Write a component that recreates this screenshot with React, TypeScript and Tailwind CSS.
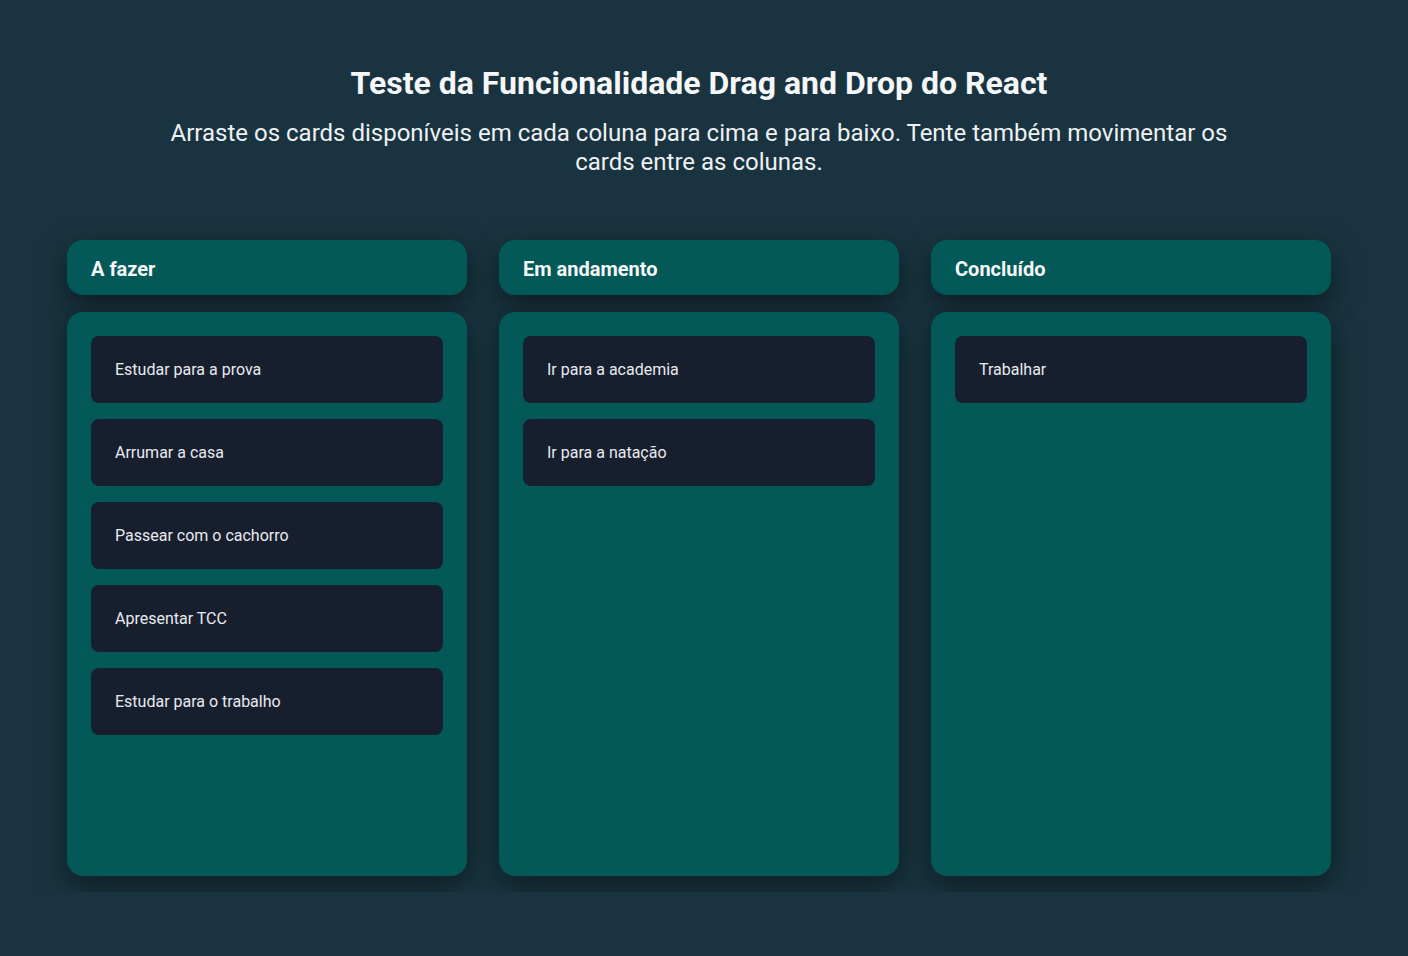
import React from "react";

const columns = [
  { title: "A fazer", cards: ["Estudar para a prova", "Arrumar a casa", "Passear com o cachorro", "Apresentar TCC", "Estudar para o trabalho"] },
  { title: "Em andamento", cards: ["Ir para a academia", "Ir para a natação"] },
  { title: "Concluído", cards: ["Trabalhar"] },
];

export default function App() {
  return (
    <div className="min-h-screen bg-[#193440] text-[#f3f4f6]" style={{ fontFamily: "Roboto, 'Noto Sans', sans-serif" }}>
      <div className="w-[1398px]">
        <div className="pt-[64px] flex flex-col items-center text-center">
          <h1 className="text-[32px] font-bold leading-[38px] text-[#f5f7f8]">Teste da Funcionalidade Drag and Drop do React</h1>
          <p className="mt-[17px] max-w-[1080px] text-[24px] leading-[29px] text-[#eef1f3]">
            Arraste os cards disponíveis em cada coluna para cima e para baixo. Tente também movimentar os cards entre as colunas.
          </p>
        </div>
        <div className="mt-[31px] overflow-x-auto pt-8 pb-4 pl-[67px]">
          <div className="flex gap-8">
            {columns.map((col) => (
              <div key={col.title} className="w-[400px] shrink-0 flex flex-col gap-[17px]">
                <div className="rounded-2xl bg-[#035957] px-6 pt-[15px] pb-[11px] shadow-[0_10px_30px_rgba(0,0,0,0.45)]">
                  <h2 className="text-[20px] font-bold leading-[29px] text-[#f5f7f8]">{col.title}</h2>
                </div>
                <div className="h-[564px] rounded-2xl bg-[#035957] p-6 flex flex-col gap-4 shadow-[0_10px_30px_rgba(0,0,0,0.45)]">
                  {col.cards.map((c) => (
                    <div key={c} className="rounded-lg bg-[#171f2f] px-6 py-[24px] text-[16px] font-normal leading-[19px] text-[#e8eaee]">
                      {c}
                    </div>
                  ))}
                </div>
              </div>
            ))}
          </div>
        </div>
      </div>
    </div>
  );
}
